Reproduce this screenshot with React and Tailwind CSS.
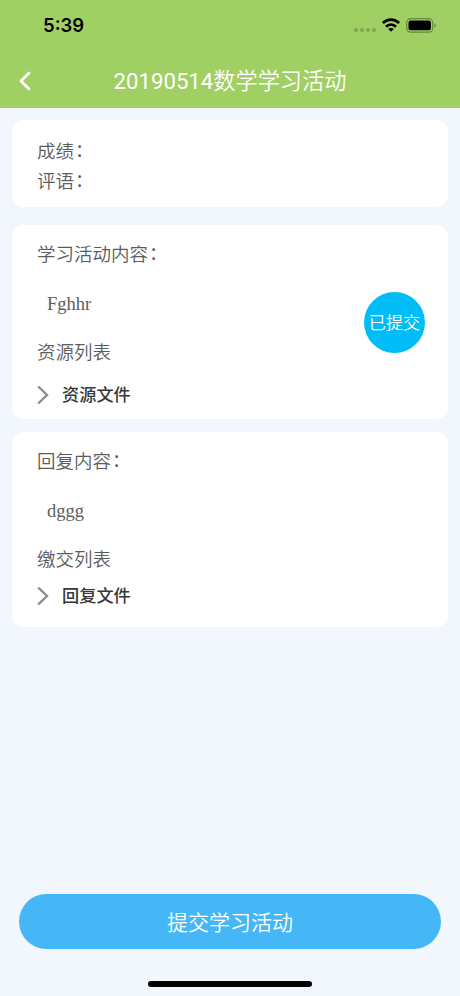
const FONT = "font-['Roboto','Noto_Sans_CJK_SC',sans-serif]";

function StatusBar() {
  return (
    <div className="flex h-[50px] items-center justify-between pl-[43px] pr-[23px] text-black">
      <span className="font-['Inter',sans-serif] text-[18.5px] font-semibold leading-none">
        5:39
      </span>
      <div className="flex items-center">
        <div className="mr-[6px] mt-[9px] flex gap-[2px]">
          {[0, 1, 2, 3].map((i) => (
            <span key={i} className="h-[4px] w-[4px] rounded-full bg-[#7fa64c]" />
          ))}
        </div>
        <svg width="18" height="14" viewBox="0 0 18 14" fill="none" stroke="#000" strokeWidth="2.8">
          <path d="M0.9 5.1C5.4 0.4 12.6 0.4 17.1 5.1" />
          <path d="M4 8.7C6.9 5.8 11.1 5.8 14 8.7" />
          <path d="M6.2 11C7.8 9.5 10.2 9.5 11.8 11L9 13.8Z" fill="#000" stroke="none" />
        </svg>
        <svg className="ml-[6px]" width="31" height="15" viewBox="0 0 31 15">
          <rect x="0.7" y="0.7" width="26" height="13.4" rx="3.8" fill="none" stroke="#668a38" strokeWidth="1.2" />
          <rect x="2.5" y="2.6" width="22.4" height="9.6" rx="2" fill="#000" />
          <path d="M28.4 5.2C30.2 6 30.2 8.8 28.4 9.6Z" fill="#668a38" />
        </svg>
      </div>
    </div>
  );
}

function Header({ date, title }) {
  return (
    <header className="h-[108px] shrink-0 bg-[#a0cf63]">
      <StatusBar />
      <div className="grid h-[61px] grid-cols-[50px_1fr_50px] items-center">
        <button type="button" className="pl-[19px]">
          <svg width="12" height="20" viewBox="0 0 12 20" fill="none" stroke="#fff" strokeWidth="2.8" strokeLinecap="round" strokeLinejoin="round">
            <path d="M10 2L2 10L10 18" />
          </svg>
        </button>
        <h1 className="whitespace-nowrap pt-[2px] text-center text-[22.2px] font-[350] leading-none text-white">
          <span className="font-normal">{date}</span>
          {title}
        </h1>
      </div>
    </header>
  );
}

function Colon() {
  return <span className="ml-[1px] align-[1px] leading-none">：</span>;
}

function Section({ heading, content, listTitle, fileLabel, className, fileClassName }) {
  return (
    <section className={`rounded-[12px] bg-white pl-[25px] pr-[23px] pt-[15px] ${className}`}>
      <h2 className="h-[30px] text-[18.5px] font-[350] leading-[30px]">
        {heading}
        <Colon />
      </h2>
      <p className="h-[68px] pl-[10px] font-['Liberation_Serif',serif] text-[18.5px] leading-[68px]">
        {content}
      </p>
      <h2 className="h-[30px] text-[18.5px] font-[350] leading-[30px]">{listTitle}</h2>
      <div className={`flex h-[30px] items-center text-[17.2px] font-medium text-[#383838] ${fileClassName}`}>
        <svg className="mr-[13px]" width="12" height="20" viewBox="0 0 12 20" fill="none" stroke="#8c8c8c" strokeWidth="2.4">
          <path d="M1.2 1.5L10 10L1.2 18.5" />
        </svg>
        <span className="leading-[30px]">{fileLabel}</span>
      </div>
    </section>
  );
}

export default function App() {
  return (
    <div lang="zh-CN" className={`flex h-[996px] w-[460px] flex-col overflow-hidden bg-[#f2f7fd] text-[#5c5c5c] ${FONT}`}>
      <Header date="20190514" title="数学学习活动" />
      <main className="flex flex-1 flex-col px-[12px] pt-[12px]">
        <section className="h-[87px] rounded-[12px] bg-white pl-[25px] pt-[18px] text-[18.5px] font-[350] leading-[29.5px]">
          <p>
            成绩
            <Colon />
          </p>
          <p>
            评语
            <Colon />
          </p>
        </section>
        <div className="relative mt-[18px]">
          <Section
            heading="学习活动内容"
            content="Fghhr"
            listTitle="资源列表"
            fileLabel="资源文件"
            className="h-[194px]"
            fileClassName="mt-[12px]"
          />
          <span className="absolute right-[23px] top-[66.5px] flex h-[61px] w-[61px] items-center justify-center whitespace-nowrap rounded-full bg-[#00bdf7] pt-[3px] text-[17.2px] font-[350] text-white">
            已提交
          </span>
        </div>
        <Section
          heading="回复内容"
          content="dggg"
          listTitle="缴交列表"
          fileLabel="回复文件"
          className="mt-[13px] h-[195px]"
          fileClassName="mt-[6px]"
        />
      </main>
      <footer className="flex flex-col items-center px-[19px] pb-[9px]">
        <button
          type="button"
          className="h-[55px] w-full rounded-full bg-[#46b7f6] pt-[3px] text-[21px] font-[350] leading-[52px] text-white"
        >
          提交学习活动
        </button>
        <div className="mt-[32px] h-[6px] w-[164px] rounded-full bg-black" />
      </footer>
    </div>
  );
}
